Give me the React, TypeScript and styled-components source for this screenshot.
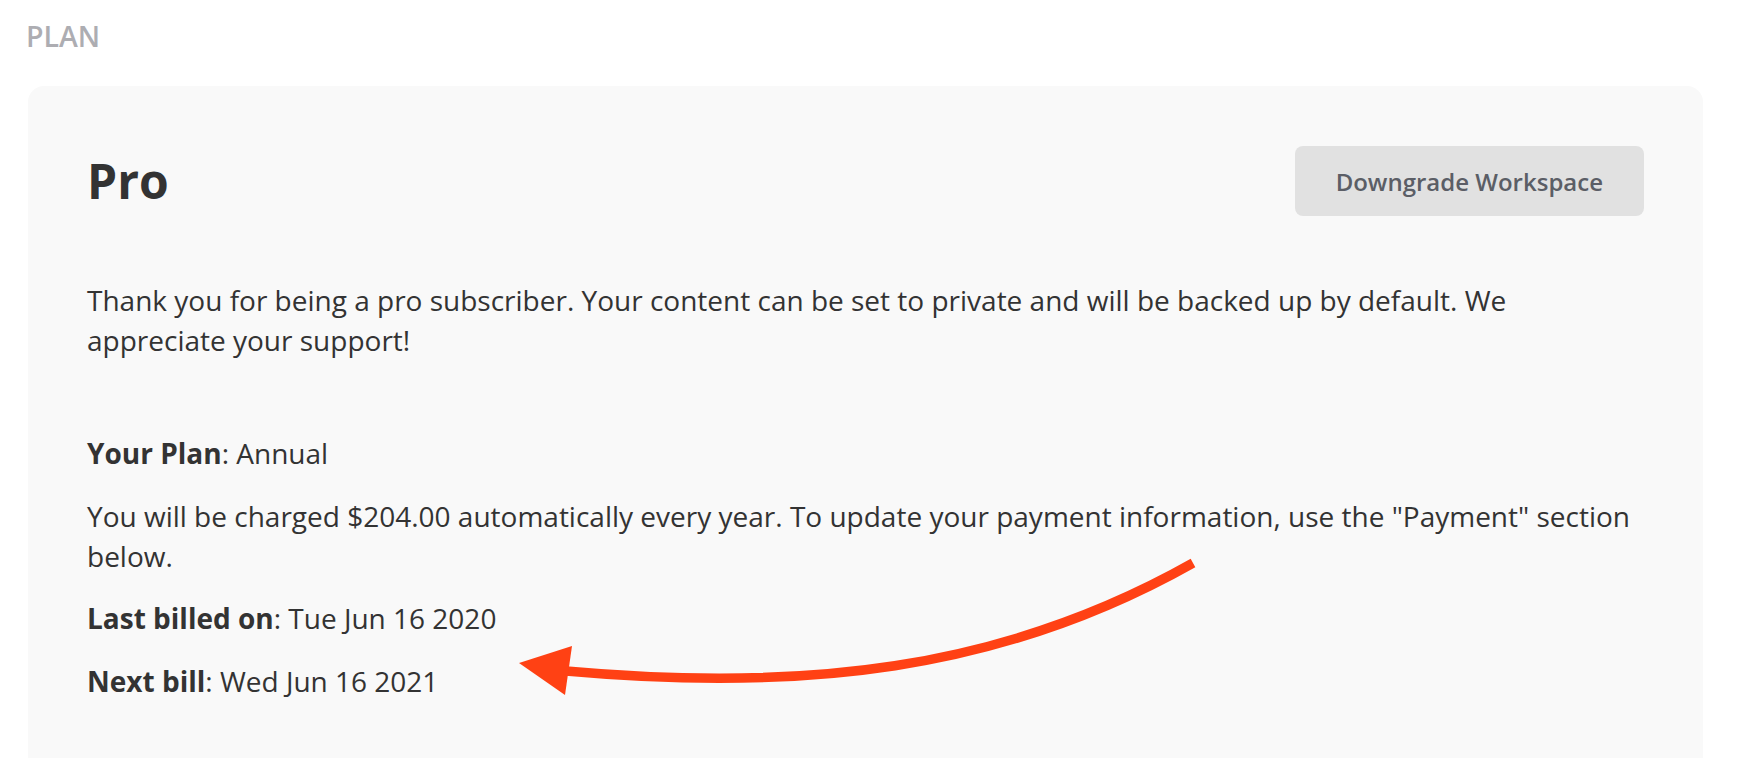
import React from "react";
import styled, { createGlobalStyle } from "styled-components";

const GlobalStyle = createGlobalStyle`
  html, body {
    margin: 0;
    padding: 0;
    background: #ffffff;
  }
  body {
    font-family: "Open Sans", "Noto Sans", sans-serif;
    color: #333333;
    -webkit-font-smoothing: antialiased;
  }
`;

const Page = styled.div`
  padding: 18px 37px 0 28px;
`;

const SectionLabel = styled.div`
  font-size: 28.5px;
  line-height: 36px;
  font-weight: 600;
  color: #adadb2;
  text-transform: uppercase;
  margin-left: -2px;
`;

const Card = styled.section`
  position: relative;
  margin-top: 32px;
  background: #f9f9f9;
  border-radius: 16px;
  padding: 60px 59px 120px 59px;
`;

const Header = styled.div`
  display: flex;
  align-items: center;
  justify-content: space-between;
`;

const PlanName = styled.h2`
  margin: 0;
  font-size: 48px;
  line-height: 56px;
  font-weight: 700;
  color: #333333;
`;

const Button = styled.button`
  height: 70px;
  padding: 0 41px;
  border: none;
  border-radius: 8px;
  background: #e1e1e1;
  color: #5b5e66;
  font-family: "Open Sans", "Noto Sans", sans-serif;
  font-size: 24px;
  font-weight: 600;
  cursor: pointer;
`;

const Intro = styled.p`
  margin: 64px 0 73px;
  font-size: 28px;
  line-height: 40px;
  color: #333333;
`;

const Details = styled.div`
  display: flex;
  flex-direction: column;
  gap: 22.6px;
`;

const Detail = styled.p`
  margin: 0;
  font-size: 28px;
  line-height: 40px;
  color: #333333;

  strong {
    font-weight: 700;
  }
`;

const ArrowLayer = styled.svg`
  position: absolute;
  left: 452px;
  top: 454px;
  width: 760px;
  height: 180px;
  overflow: visible;
  pointer-events: none;
`;

export default function App() {
  return (
    <>
      <GlobalStyle />
      <Page>
        <SectionLabel>Plan</SectionLabel>
        <Card>
          <Header>
            <PlanName>Pro</PlanName>
            <Button>Downgrade Workspace</Button>
          </Header>
          <Intro>
            Thank you for being a pro subscriber. Your content can be set to
            private and will be backed up by default. We appreciate your
            support!
          </Intro>
          <Details>
            <Detail>
              <strong>Your Plan</strong>: Annual
            </Detail>
            <Detail>
              You will be charged $204.00 automatically every year. To update
              your payment information, use the "Payment" section below.
            </Detail>
            <Detail>
              <strong>Last billed on</strong>: Tue Jun 16 2020
            </Detail>
            <Detail>
              <strong>Next bill</strong>: Wed Jun 16 2021
            </Detail>
          </Details>
          <ArrowLayer viewBox="480 540 760 180">
            <path
              d="M 1193 563 C 1000 672, 800 692, 566 671"
              fill="none"
              stroke="#ff4114"
              strokeWidth="9.5"
            />
            <polygon points="519,663 572,646 565,695" fill="#ff4114" />
          </ArrowLayer>
        </Card>
      </Page>
    </>
  );
}
